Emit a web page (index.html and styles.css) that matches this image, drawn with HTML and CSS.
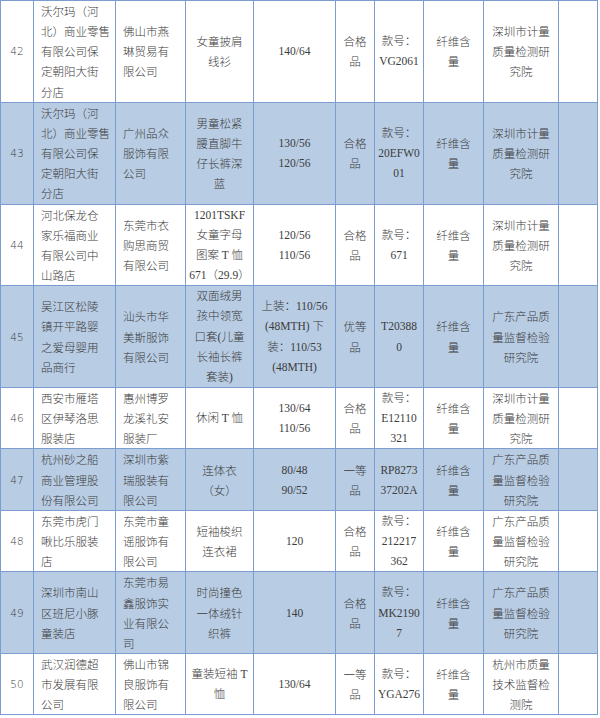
FILE: index.html
```html
<!DOCTYPE html>
<html lang="zh-CN">
<head>
<meta charset="utf-8">
<title>抽查结果</title>
<link rel="stylesheet" href="styles.css">
</head>
<body>
<table class="grid">
  <colgroup>
    <col class="c-no"><col class="c-seller"><col class="c-maker"><col class="c-prod"><col class="c-spec">
    <col class="c-res"><col class="c-model"><col class="c-item"><col class="c-org"><col class="c-note">
  </colgroup>
  <tbody>
    <tr>
      <td class="no">42</td>
      <td class="left">沃尔玛（河<br>北）商业零售<br>有限公司保<br>定朝阳大街<br>分店</td>
      <td class="left">佛山市燕<br>琳贸易有<br>限公司</td>
      <td>女童披肩<br>线衫</td>
      <td class="lat">140/64</td>
      <td>合格<br>品</td>
      <td class="lat">款号：<br>VG2061</td>
      <td>纤维含<br>量</td>
      <td>深圳市计量<br>质量检测研<br>究院</td>
      <td></td>
    </tr>
    <tr class="alt">
      <td class="no">43</td>
      <td class="left">沃尔玛（河<br>北）商业零售<br>有限公司保<br>定朝阳大街<br>分店</td>
      <td class="left">广州品众<br>服饰有限<br>公司</td>
      <td>男童松紧<br>腰直脚牛<br>仔长裤深<br>蓝</td>
      <td class="lat">130/56<br>120/56</td>
      <td>合格<br>品</td>
      <td class="lat">款号：<br>20EFW0<br>01</td>
      <td>纤维含<br>量</td>
      <td>深圳市计量<br>质量检测研<br>究院</td>
      <td></td>
    </tr>
    <tr>
      <td class="no">44</td>
      <td class="left">河北保龙仓<br>家乐福商业<br>有限公司中<br>山路店</td>
      <td class="left">东莞市衣<br>购思商贸<br>有限公司</td>
      <td class="lat">1201TSKF<br>女童字母<br>图案 T 恤<br>671（29.9）</td>
      <td class="lat">120/56<br>110/56</td>
      <td>合格<br>品</td>
      <td class="lat">款号：<br>671</td>
      <td>纤维含<br>量</td>
      <td>深圳市计量<br>质量检测研<br>究院</td>
      <td></td>
    </tr>
    <tr class="alt">
      <td class="no">45</td>
      <td class="left">吴江区松陵<br>镇开平路婴<br>之爱母婴用<br>品商行</td>
      <td class="left">汕头市华<br>美斯服饰<br>有限公司</td>
      <td class="lat">双面绒男<br>孩中领宽<br>口套(儿童<br>长袖长裤<br>套装)</td>
      <td class="lat">上装：110/56<br>(48MTH) 下<br>装：110/53<br>(48MTH)</td>
      <td>优等<br>品</td>
      <td class="lat">T20388<br>0</td>
      <td>纤维含<br>量</td>
      <td>广东产品质<br>量监督检验<br>研究院</td>
      <td></td>
    </tr>
    <tr>
      <td class="no">46</td>
      <td class="left">西安市雁塔<br>区伊琴洛思<br>服装店</td>
      <td class="left">惠州博罗<br>龙溪礼安<br>服装厂</td>
      <td class="lat">休闲 T 恤</td>
      <td class="lat">130/64<br>110/56</td>
      <td>合格<br>品</td>
      <td class="lat">款号：<br>E12110<br>321</td>
      <td>纤维含<br>量</td>
      <td>深圳市计量<br>质量检测研<br>究院</td>
      <td></td>
    </tr>
    <tr class="alt">
      <td class="no">47</td>
      <td class="left">杭州砂之船<br>商业管理股<br>份有限公司</td>
      <td class="left">深圳市紫<br>瑞服装有<br>限公司</td>
      <td>连体衣<br>（女）</td>
      <td class="lat">80/48<br>90/52</td>
      <td>一等<br>品</td>
      <td class="lat">RP8273<br>37202A</td>
      <td>纤维含<br>量</td>
      <td>广东产品质<br>量监督检验<br>研究院</td>
      <td></td>
    </tr>
    <tr>
      <td class="no">48</td>
      <td class="left">东莞市虎门<br>啾比乐服装<br>店</td>
      <td class="left">东莞市童<br>谣服饰有<br>限公司</td>
      <td>短袖梭织<br>连衣裙</td>
      <td class="lat">120</td>
      <td>合格<br>品</td>
      <td class="lat">款号：<br>212217<br>362</td>
      <td>纤维含<br>量</td>
      <td>广东产品质<br>量监督检验<br>研究院</td>
      <td></td>
    </tr>
    <tr class="alt">
      <td class="no">49</td>
      <td class="left">深圳市南山<br>区班尼小豚<br>童装店</td>
      <td class="left">东莞市易<br>鑫服饰实<br>业有限公<br>司</td>
      <td>时尚撞色<br>一体绒针<br>织裤</td>
      <td class="lat">140</td>
      <td>合格<br>品</td>
      <td class="lat">款号：<br>MK2190<br>7</td>
      <td>纤维含<br>量</td>
      <td>广东产品质<br>量监督检验<br>研究院</td>
      <td></td>
    </tr>
    <tr>
      <td class="no">50</td>
      <td class="left">武汉润德超<br>市发展有限<br>公司</td>
      <td class="left">佛山市锦<br>良服饰有<br>限公司</td>
      <td class="lat">童装短袖 T<br>恤</td>
      <td class="lat">130/64</td>
      <td>一等<br>品</td>
      <td class="lat">款号：<br>YGA276</td>
      <td>纤维含<br>量</td>
      <td>杭州市质量<br>技术监督检<br>测院</td>
      <td></td>
    </tr>
  </tbody>
</table>
</body>
</html>
```

FILE: styles.css
```css
html, body {
  margin: 0;
  padding: 0;
  background: #ffffff;
}

.grid {
  border-collapse: collapse;
  table-layout: fixed;
  width: 598px;
  font-family: "Noto Sans CJK SC", "Noto Sans", sans-serif;
  font-size: 11.5px;
  font-weight: 300;
  line-height: 20.15px;
  color: #3c3c3c;
}

.c-no { width: 33px; }
.c-seller { width: 82px; }
.c-maker { width: 70px; }
.c-prod { width: 68px; }
.c-spec { width: 82px; }
.c-res { width: 39px; }
.c-model { width: 49px; }
.c-item { width: 60px; }
.c-org { width: 75px; }
.c-note { width: 39px; }

.grid td {
  border: 1px solid #7c9dd0;
  padding: 0;
  text-align: center;
  vertical-align: middle;
  white-space: nowrap;
  overflow: hidden;
}

.grid td.left {
  text-align: left;
  padding-left: 7px;
}

.grid td.no {
  font-family: "DejaVu Sans", sans-serif;
  font-size: 10.5px;
}

.grid td.lat {
  font-family: "Liberation Serif", "Noto Sans CJK SC", serif;
  font-size: 11.5px;
}

.grid tr.alt td {
  background: #b8cce4;
}
```
